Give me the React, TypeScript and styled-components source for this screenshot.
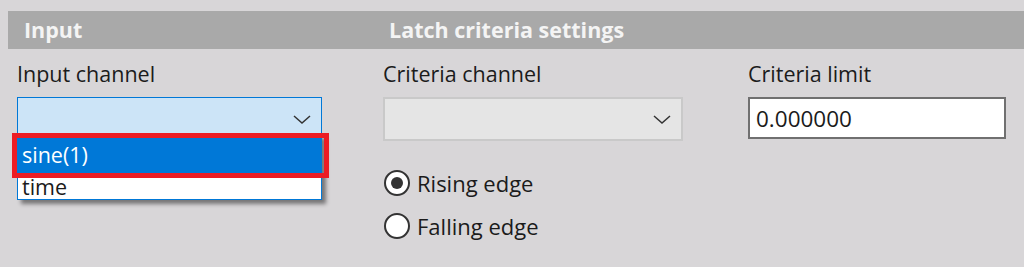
import React from "react";
import styled, { createGlobalStyle } from "styled-components";

const GlobalStyle = createGlobalStyle`
    body {
        margin: 0;
        background: #d8d6d8;
        font-family: "Open Sans", "Noto Sans", sans-serif;
        color: #1b1b1b;
    }
`;

const Page = styled.div`
    padding-top: 11px;
    height: 267px;
    box-sizing: border-box;
`;

const HeaderBar = styled.div`
    margin-left: 8px;
    height: 38px;
    background: #a9a9a9;
    display: grid;
    grid-template-columns: 365px 1fr;
    align-items: center;
`;

const HeaderCell = styled.div`
    padding-left: 16px;
    font-weight: bold;
    font-size: 21.5px;
    line-height: 30px;
    color: #f4f4f4;
`;

const Content = styled.div`
    display: grid;
    grid-template-columns: 366px 365px 258px;
    padding: 10px 0 0 17px;
    align-items: start;
`;

const Field = styled.div`
    display: flex;
    flex-direction: column;
`;

const Label = styled.div`
    font-size: 21.5px;
    line-height: 29px;
    margin-bottom: 9px;
`;

const SelectWrapper = styled.div<{ $width: number }>`
    position: relative;
    width: ${p => p.$width}px;
`;

const SelectBox = styled.div<{ $active?: boolean }>`
    box-sizing: border-box;
    height: 44px;
    display: flex;
    align-items: center;
    justify-content: flex-end;
    padding-right: 10px;
    background: ${p => (p.$active ? "#cce4f7" : "#e5e5e5")};
    border: ${p => (p.$active ? "1px solid #0078d7" : "2px solid #c9c9c9")};
`;

const DropList = styled.div`
    position: absolute;
    top: 37px;
    left: 0;
    right: 0;
    box-sizing: border-box;
    background: #ffffff;
    border: 1px solid #0078d7;
    box-shadow: 4px 4px 4px rgba(0, 0, 0, 0.45);
    z-index: 2;
`;

const DropItem = styled.div<{ $selected?: boolean; $height: number }>`
    height: ${p => p.$height}px;
    display: flex;
    align-items: center;
    padding-left: 4px;
    font-size: 21.5px;
    background: ${p => (p.$selected ? "#0078d7" : "transparent")};
    color: ${p => (p.$selected ? "#ffffff" : "#1b1b1b")};
`;

const Highlight = styled.div`
    position: absolute;
    top: 36px;
    left: -5px;
    width: 317px;
    height: 45px;
    box-sizing: border-box;
    border: 5px solid #ec1c24;
    z-index: 3;
    pointer-events: none;
`;

const TextBox = styled.div`
    box-sizing: border-box;
    width: 258px;
    height: 42px;
    background: #ffffff;
    border: 2px solid #707070;
    padding-left: 6px;
    display: flex;
    align-items: center;
    font-size: 22.5px;
`;

const RadioGroup = styled.div`
    margin-top: 20px;
    display: flex;
    flex-direction: column;
`;

const RadioRow = styled.div`
    height: 43px;
    display: flex;
    align-items: center;
    gap: 7px;
    padding-left: 1px;
    font-size: 22px;
`;

const RadioCircle = styled.span<{ $checked?: boolean }>`
    box-sizing: border-box;
    width: 26px;
    height: 26px;
    border-radius: 50%;
    border: 2px solid #333333;
    background: #ffffff;
    display: flex;
    align-items: center;
    justify-content: center;

    &::after {
        content: "";
        width: 12px;
        height: 12px;
        border-radius: 50%;
        background: ${p => (p.$checked ? "#333333" : "transparent")};
    }
`;

const Chevron = () => (
    <svg width="18" height="9" viewBox="0 0 18 9">
        <polyline points="1,1 9,8 17,1" fill="none" stroke="#333333" strokeWidth="1.5" />
    </svg>
);

export default function App() {
    return (
        <Page>
            <GlobalStyle />
            <HeaderBar>
                <HeaderCell>Input</HeaderCell>
                <HeaderCell>Latch criteria settings</HeaderCell>
            </HeaderBar>
            <Content>
                <Field>
                    <Label>Input channel</Label>
                    <SelectWrapper $width={305}>
                        <SelectBox $active>
                            <Chevron />
                        </SelectBox>
                        <DropList>
                            <DropItem $selected $height={38}>sine(1)</DropItem>
                            <DropItem $height={26}>time</DropItem>
                        </DropList>
                        <Highlight />
                    </SelectWrapper>
                </Field>

                <Field>
                    <Label>Criteria channel</Label>
                    <SelectWrapper $width={300}>
                        <SelectBox>
                            <Chevron />
                        </SelectBox>
                    </SelectWrapper>
                    <RadioGroup>
                        <RadioRow>
                            <RadioCircle $checked />
                            Rising edge
                        </RadioRow>
                        <RadioRow>
                            <RadioCircle />
                            Falling edge
                        </RadioRow>
                    </RadioGroup>
                </Field>

                <Field>
                    <Label>Criteria limit</Label>
                    <TextBox>0.000000</TextBox>
                </Field>
            </Content>
        </Page>
    );
}
